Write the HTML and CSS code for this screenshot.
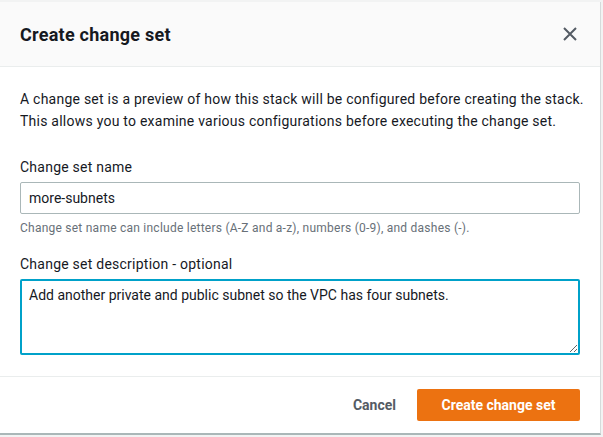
FILE: index.html
```html
<!DOCTYPE html>
<html>
<head>
<meta charset="utf-8">
<link rel="stylesheet" href="styles.css">
</head>
<body>
<div class="modal">
  <div class="modal-header">
    <h2 class="title">Create change set</h2>
    <button class="close" aria-label="Close">
      <svg width="16" height="16" viewBox="0 0 16 16"><path d="M2 2 L14 14 M14 2 L2 14" stroke="#545b64" stroke-width="2" fill="none"/></svg>
    </button>
  </div>
  <div class="modal-body">
    <p class="intro">A change set is a preview of how this stack will be configured before creating the stack. This allows you to examine various configurations before executing the change set.</p>
    <div class="field">
      <label class="label">Change set name</label>
      <input class="input" type="text" value="more-subnets">
      <div class="hint">Change set name can include letters (A-Z and a-z), numbers (0-9), and dashes (-).</div>
    </div>
    <div class="field">
      <label class="label">Change set description - optional</label>
      <textarea class="textarea">Add another private and public subnet so the VPC has four subnets.</textarea>
    </div>
  </div>
  <div class="modal-footer">
    <button class="btn-link">Cancel</button>
    <button class="btn-primary">Create change set</button>
  </div>
</div>
</body>
</html>
```
FILE: styles.css
```css
html, body {
  margin: 0;
  padding: 0;
  background: #f2f3f3;
}
body {
  font-family: Roboto, "Liberation Sans", sans-serif;
  color: #16191f;
  letter-spacing: 0.24px;
  padding-top: 2px;
}
.modal {
  width: 600px;
  height: 431px;
  background: #fff;
  border-right: 1px solid #d5dbdb;
  border-bottom: 2px solid #aab7b8;
  display: flex;
  flex-direction: column;
  overflow: hidden;
}
.modal-header {
  height: 64px;
  background: #fafafa;
  border-bottom: 1px solid #eaeded;
  display: flex;
  align-items: center;
  justify-content: space-between;
  padding: 0 22px 0 20px;
  flex: none;
}
.title {
  margin: 0;
  font-size: 18px;
  font-weight: 700;
  color: #16191f;
  letter-spacing: 0.25px;
}
.close {
  border: 0;
  background: none;
  padding: 0;
  display: flex;
  width: 16px;
  height: 16px;
}
.modal-body {
  padding: 21px 20px 0 20px;
  flex: 1;
}
.intro {
  margin: 0 -14px 24px 0;
  font-size: 14px;
  line-height: 22px;
}
.field {
  display: flex;
  flex-direction: column;
  margin-bottom: 17px;
}
.label {
  font-size: 14px;
  line-height: 22px;
  margin-bottom: 4px;
}
.input {
  box-sizing: border-box;
  height: 32px;
  border: 1px solid #aab7b8;
  border-radius: 2px;
  padding: 0 8px;
  font: inherit;
  font-size: 14px;
  color: #16191f;
  margin: 0;
}
.hint {
  font-size: 12px;
  color: #687078;
  line-height: 16px;
  margin-top: 6px;
}
.textarea {
  box-sizing: border-box;
  height: 76px;
  border: 2px solid #00a1c9;
  border-radius: 2px;
  padding: 4px 7px;
  font: inherit;
  font-size: 14px;
  line-height: 20px;
  color: #16191f;
  resize: vertical;
  outline: none;
  margin: 0;
}
.modal-footer {
  border-top: 1px solid #eaeded;
  height: 56px;
  display: flex;
  align-items: center;
  justify-content: flex-end;
  padding: 0 20px;
  gap: 21px;
  flex: none;
}
.btn-link {
  border: 0;
  background: none;
  font: inherit;
  font-size: 14px;
  font-weight: 700;
  color: #545b64;
  padding: 0;
}
.btn-primary {
  border: 0;
  background: #ec7211;
  color: #fff;
  font: inherit;
  font-size: 14px;
  font-weight: 700;
  height: 32px;
  width: 163px;
  border-radius: 2px;
}
```
